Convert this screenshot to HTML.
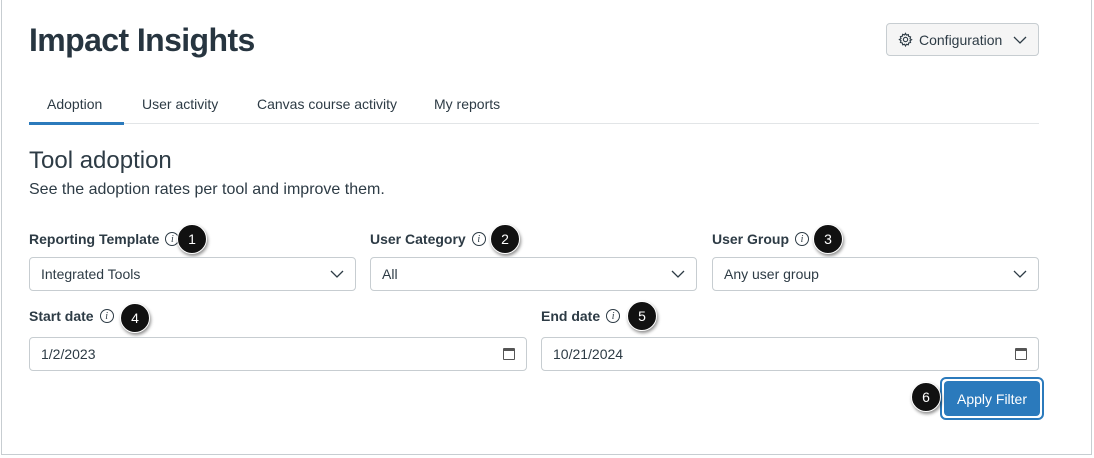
<!DOCTYPE html>
<html><head><style>
*{box-sizing:border-box;margin:0;padding:0}
body{width:1094px;height:458px;background:#fff;font-family:"Liberation Sans",sans-serif;color:#2d3b45;position:relative;overflow:hidden}
.frame{position:absolute;left:1px;top:0;width:1091px;height:455px;border:1px solid #c7cdd1;border-top:none}
.abs{position:absolute}
h1{position:absolute;left:29px;top:22px;font-size:32px;font-weight:bold;color:#273540;letter-spacing:-0.6px}
.cfg{left:886px;top:23px;width:153px;height:33px;border:1px solid #c7cdd1;border-radius:4px;background:#f5f5f5;font-size:14px;display:flex;align-items:center;padding-left:11px;gap:6px}
.tab{top:96px;font-size:14px;color:#2d3b45}
.sel{height:34px;border:1px solid #c7cdd1;border-radius:4px;font-size:14px;padding-left:11px;display:flex;align-items:center;background:#fff}
.lbl{font-size:14px;font-weight:bold;display:flex;align-items:center;gap:6px}
.i{width:14px;height:14px;border:1px solid #2d3b45;border-radius:50%;font-size:10px;font-style:italic;font-family:"Liberation Serif",serif;display:inline-flex;align-items:center;justify-content:center;font-weight:normal}
.b{width:30px;height:30px;border-radius:50%;background:#111;color:#fff;font-size:14px;display:flex;align-items:center;justify-content:center;box-shadow:1px 2px 3px rgba(0,0,0,.45);border:1.5px solid #fff}
.chev{position:absolute;right:10px;top:10px}
.cal{position:absolute;right:11px;top:10px;width:12px;height:12px;border:1.5px solid #555;border-top-width:3px;border-radius:1px}
</style></head><body>
<div class="frame"></div>
<h1>Impact Insights</h1>
<div class="abs cfg"><svg width="15" height="15" viewBox="0 0 16 16" fill="none" stroke="#2d3b45" stroke-width="1.2"><circle cx="8" cy="8" r="2.3"/><path d="M8 1.5l1 1.8 2-.6.4 2 2 .5-.6 2 1.7 1-1.7 1 .6 2-2 .5-.4 2-2-.6-1 1.8-1-1.8-2 .6-.4-2-2-.5.6-2L1.5 8l1.7-1-.6-2 2-.5.4-2 2 .6z"/></svg>Configuration<svg width="16" height="10" viewBox="0 0 16 10" style="margin-left:4px"><path d="M2 2l6 6 6-6" fill="none" stroke="#2d3b45" stroke-width="1.3"/></svg></div>
<div class="abs tab" style="left:47px">Adoption</div>
<div class="abs tab" style="left:142px">User activity</div>
<div class="abs tab" style="left:257px">Canvas course activity</div>
<div class="abs tab" style="left:434px">My reports</div>
<div class="abs" style="left:29px;top:123px;width:1010px;height:1px;background:#e2e5e7"></div>
<div class="abs" style="left:29px;top:122px;width:95px;height:3px;background:#2b7abc"></div>
<div class="abs" style="left:29px;top:147px;font-size:24px">Tool adoption</div>
<div class="abs" style="left:29px;top:181px;font-size:16px">See the adoption rates per tool and improve them.</div>

<div class="abs lbl" style="left:29px;top:231px">Reporting Template <span class="i">i</span></div>
<div class="abs lbl" style="left:370px;top:231px">User Category <span class="i">i</span></div>
<div class="abs lbl" style="left:712px;top:231px">User Group <span class="i">i</span></div>
<div class="abs b" style="left:177px;top:224px">1</div>
<div class="abs b" style="left:490px;top:224px">2</div>
<div class="abs b" style="left:813px;top:224px">3</div>

<div class="abs sel" style="left:29px;top:257px;width:327px">Integrated Tools<svg class="chev" width="16" height="12" viewBox="0 0 16 12"><path d="M2 3l6 6 6-6" fill="none" stroke="#2d3b45" stroke-width="1.3"/></svg></div>
<div class="abs sel" style="left:370px;top:257px;width:327px">All<svg class="chev" width="16" height="12" viewBox="0 0 16 12"><path d="M2 3l6 6 6-6" fill="none" stroke="#2d3b45" stroke-width="1.3"/></svg></div>
<div class="abs sel" style="left:712px;top:257px;width:327px">Any user group<svg class="chev" width="16" height="12" viewBox="0 0 16 12"><path d="M2 3l6 6 6-6" fill="none" stroke="#2d3b45" stroke-width="1.3"/></svg></div>

<div class="abs lbl" style="left:29px;top:308px">Start date <span class="i">i</span></div>
<div class="abs lbl" style="left:541px;top:308px">End date <span class="i">i</span></div>
<div class="abs b" style="left:120px;top:303px">4</div>
<div class="abs b" style="left:627px;top:301px">5</div>

<div class="abs sel" style="left:29px;top:337px;width:498px">1/2/2023<span class="cal"></span></div>
<div class="abs sel" style="left:541px;top:337px;width:498px">10/21/2024<span class="cal"></span></div>

<div class="abs" style="left:940px;top:377px;width:104px;height:43px;border:2px solid #2b7abc;border-radius:6px"></div>
<div class="abs" style="left:944px;top:381px;width:96px;height:35px;background:#2b7abc;border-radius:4px;color:#fff;font-size:14px;display:flex;align-items:center;justify-content:center">Apply Filter</div>
<div class="abs b" style="left:911px;top:382px">6</div>
</body></html>
